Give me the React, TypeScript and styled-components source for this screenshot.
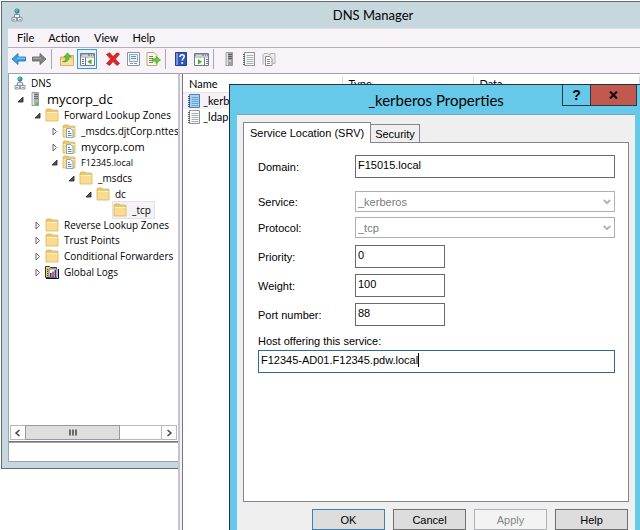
import React from "react";
import styled, { createGlobalStyle } from "styled-components";

const ui = `Lato, "Open Sans", sans-serif`;
const treeFont = `"Open Sans", Lato, sans-serif`;
const classic = `"Liberation Sans", Arial, sans-serif`;

const GlobalStyle = createGlobalStyle`
  *, *::before, *::after { box-sizing: border-box; }
  body { margin: 0; background: #fff; color: #000; font-family: ${ui}; font-size: 11px; }
  button, input, select { font: inherit; color: inherit; margin: 0; padding: 0; border-radius: 0; outline: none; }
  svg { display: block; flex: none; }
`;

const Page = styled.div`
  position: relative;
  min-height: 100vh;
  padding: 1px 0 0 1px;
  display: flex;
  flex-direction: column;
  overflow: hidden;
`;

const ConsoleHead = styled.div`
  border-top: 1px solid #5d6d74;
  border-left: 1px solid #5d6d74;
  background: #c6d8de;
  padding-left: 6px;
`;

const ConsoleTitle = styled.header`
  display: grid;
  grid-template-columns: 18px 1fr;
  align-items: center;
  height: 26px;
`;

const TitleIcon = styled.span`
  padding-left: 3px;
`;

const TitleText = styled.h1`
  margin: 0;
  padding-left: 80px;
  text-align: center;
  font-size: 13px;
  font-weight: 400;
  line-height: 20px;
`;

const MenuBar = styled.nav`
  display: flex;
  gap: 14px;
  height: 20px;
  padding-left: 9px;
  background: #f7f3f8;
  border-top: 1px solid #dfe3ea;
  border-bottom: 1px solid #b4b0ba;
`;

const MenuItem = styled.button`
  border: 0;
  background: none;
  font-size: 11px;
  line-height: 18px;
`;

const ToolBar = styled.div`
  display: flex;
  align-items: flex-start;
  height: 25px;
  padding: 1px 0 0 1px;
  background: #f7f3f8;
`;

const Tool = styled.button<{ $on?: boolean }>`
  width: 20px;
  height: 20px;
  display: grid;
  place-items: center;
  border: 1px solid ${(p) => (p.$on ? "#2f9fd6" : "transparent")};
  background: ${(p) => (p.$on ? "#e2f1fa" : "none")};
  margin-right: ${(p) => (p.$on ? "6px" : "0")};
`;

const ToolSeparator = styled.span`
  width: 1px;
  height: 20px;
  margin: 0 5px 0 2px;
  background: #aaa7b0;
`;

const Body = styled.div`
  flex: 1;
  display: grid;
  grid-template-columns: 177px 1fr;
`;

const LeftFrame = styled.section`
  display: flex;
  flex-direction: column;
  margin-bottom: 61px;
  padding: 0 0 6px 6px;
  border-left: 1px solid #5d6d74;
  border-bottom: 1px solid #5d6d74;
  background: #c6d8de;
`;

const TreePane = styled.div`
  flex: 1;
  display: flex;
  flex-direction: column;
  min-width: 0;
  background: #fff;
  border-top: 1px solid #a3a0ac;
  border-left: 1px solid #a3a0ac;
  border-bottom: 1px solid #77748a;
  padding: 1px;
`;

const TreeList = styled.ul`
  flex: 1;
  margin: 0;
  padding: 0;
  list-style: none;
  font-family: ${treeFont};
`;

const TreeRow = styled.li<{ $depth: number; $compact?: boolean }>`
  display: flex;
  align-items: center;
  height: ${(p) => (p.$compact ? 15 : 16)}px;
  padding-left: ${(p) => (p.$depth < 0 ? 4 : 7 + p.$depth * 17)}px;
  white-space: nowrap;
`;

const Twisty = styled.button`
  flex: none;
  width: 8px;
  height: 12px;
  margin-right: 3px;
  border: 0;
  background: none;
`;

const Node = styled.span<{ $size?: number; $selected?: boolean }>`
  display: flex;
  align-items: center;
  gap: 5px;
  height: 16px;
  padding-right: 3px;
  font-size: ${(p) => p.$size ?? 10}px;
  background: ${(p) => (p.$selected ? "#f5f2f7" : "none")};
  box-shadow: ${(p) => (p.$selected ? "0 0 0 1px #e4e0e6" : "none")};
`;

const ScrollBar = styled.div`
  display: grid;
  grid-template-columns: 14px 95px 1fr 14px;
  height: 15px;
  border: 1px solid #b9b9b9;
`;

const ScrollArrow = styled.button`
  display: grid;
  place-items: center;
  border: 0;
  background: #fff;
`;

const ScrollThumb = styled.div`
  display: grid;
  place-items: center;
  background: #dedede;
  border: 1px solid #9a9a9a;
  margin: -1px 0;
`;

const ScrollTrack = styled.div`
  border-right: 1px solid #b9b9b9;
`;

const StatusStrip = styled.div`
  height: 20px;
  background: #fff;
  border: 1px solid #a3a0ac;
  border-right: 0;
`;

const ListPane = styled.section`
  display: flex;
  flex-direction: column;
  background: #f4f2f6;
  border-left: 2px solid #c5c3cc;
  border-top: 1px solid #a3a0ac;
`;

const ListInner = styled.div`
  flex: 1;
  margin-left: 2px;
  padding-top: 2px;
  border-left: 1px solid #77748a;
  background: #fff;
`;

const RecordTable = styled.table`
  width: 100%;
  border-collapse: collapse;
  table-layout: fixed;
`;

const HeadCell = styled.th<{ $width?: number }>`
  width: ${(p) => (p.$width ? `${p.$width}px` : "auto")};
  height: 16px;
  padding: 0 0 0 6px;
  text-align: left;
  font-weight: 400;
  line-height: 14px;
  border-right: 1px solid #dcd8e0;
  border-bottom: 1px solid #e6e3ea;
`;

const RecordCell = styled.td<{ $selected?: boolean }>`
  height: 16px;
  padding: 0 0 0 4px;
  background: ${(p) => (p.$selected ? "#f5f2f7" : "none")};
`;

const RecordName = styled.span`
  display: flex;
  align-items: center;
  gap: 2px;
  height: 16px;
  font-size: 11px;
`;

const Dialog = styled.section`
  position: absolute;
  top: 84px;
  left: 229px;
  right: 0;
  bottom: 0;
  display: flex;
  flex-direction: column;
  padding: 0 5px 0 7px;
  background: #66c9ea;
  border-top: 1px solid #24323a;
  border-left: 1px solid #24323a;
  overflow: hidden;
`;

const DialogHead = styled.header`
  position: relative;
  height: 29px;
`;

const DialogTitle = styled.h2`
  margin: 0;
  text-align: center;
  font-size: 15px;
  font-weight: 400;
  line-height: 30px;
`;

const Caption = styled.div`
  position: absolute;
  top: 0;
  right: -2px;
  display: flex;
`;

const CaptionButton = styled.button<{ $close?: boolean }>`
  display: grid;
  place-items: center;
  width: ${(p) => (p.$close ? 47 : 29)}px;
  height: 21px;
  margin-left: -1px;
  border: 1px solid #2b3b44;
  border-top: 0;
  background: ${(p) => (p.$close ? "#c2594f" : "#66c9ea")};
  font: 700 14px/20px ${classic};
`;

const DialogBody = styled.div`
  flex: 1;
  display: flex;
  flex-direction: column;
  padding: 7px 6px 0 6px;
  background: #efefef;
  border-top: 1px solid #76a9bd;
  font-family: ${classic};
  font-size: 11px;
`;

const TabList = styled.div`
  display: flex;
  align-items: flex-end;
  height: 20px;
`;

const Tab = styled.button<{ $active?: boolean }>`
  position: relative;
  height: ${(p) => (p.$active ? 21 : 18)}px;
  margin-bottom: ${(p) => (p.$active ? -1 : 0)}px;
  padding: 0 ${(p) => (p.$active ? 6 : 4)}px;
  border: 1px solid #85858f;
  border-left-width: ${(p) => (p.$active ? 1 : 0)}px;
  border-bottom: 0;
  background: ${(p) => (p.$active ? "#fff" : "#efefef")};
  line-height: 18px;
  white-space: nowrap;
`;

const TabPanel = styled.form`
  flex: 1;
  padding: 12px 13px 0 14px;
  background: #fff;
  border: 1px solid #85858f;
`;

const Field = styled.div<{ $gap?: number }>`
  display: grid;
  grid-template-columns: 97px 1fr;
  align-items: center;
  margin-top: ${(p) => p.$gap ?? 0}px;
`;

const TextBox = styled.input<{ $short?: boolean }>`
  display: block;
  width: ${(p) => (p.$short ? "90px" : "100%")};
  height: 23px;
  padding: 0 2px 3px;
  border: 1px solid #6a6a6a;
  background: #fff;
`;

const SelectWrap = styled.div`
  position: relative;
  svg { position: absolute; right: 4px; top: 7px; pointer-events: none; }
`;

const Select = styled.select`
  display: block;
  width: 100%;
  height: 21px;
  padding: 0 2px;
  appearance: none;
  border: 1px solid #acb0b3;
  background: #fff;
  color: #7b7b7b;
  opacity: 1;
`;

const HostLabel = styled.label`
  display: block;
  margin-top: 7px;
  line-height: 16px;
  padding-bottom: 1px;
`;

const HostBox = styled.div`
  display: flex;
  height: 23px;
  padding: 2px 2px 5px;
  border: 1px solid #2c6a9c;
  background: #fff;
`;

const HostInput = styled.input`
  field-sizing: content;
  max-width: 100%;
  border: 0;
  background: none;
`;

const Caret = styled.span`
  width: 1px;
  height: 14px;
  background: #000;
`;

const Actions = styled.div`
  display: flex;
  justify-content: flex-end;
  gap: 8px;
  padding: 7px 1px 0 0;
`;

const ActionButton = styled.button<{ $default?: boolean }>`
  width: 73px;
  height: 21px;
  border: 1px solid ${(p) => (p.$default ? "#3c7fb1" : "#707070")};
  background: #dddddd;
  &:disabled { color: #85858a; background: #f3f3f3; border-color: #adb2b5; }
`;

const DnsIcon = () => (
  <svg width="12" height="14" viewBox="0 0 12 14">
    <path d="M6 5v3M3 10V8.500h6V10" fill="none" stroke="#77838b" />
    <circle cx="6" cy="3" r="2.500" fill="#2787ad" />
    <path d="M4 2l2-1 1 1-1 2-1 0z" fill="#55d36b" />
    <path d="M3.500 6.500h5v3h-5z" fill="#eef1f2" stroke="#77838b" strokeWidth=".8" />
    <path d="M1 9.500h4.500V13H1zM6.500 9.500H11V13H6.500z" fill="#eef1f2" stroke="#77838b" strokeWidth=".8" />
    <path d="M2 11.500h2M8 11.500h2" stroke="#77838b" strokeWidth=".8" />
  </svg>
);

const ServerIcon = ({ gray = false }: { gray?: boolean }) => (
  <svg width="14" height="14" viewBox="0 0 14 14">
    <path d="M4 .500h6.500v13H4z" fill={gray ? "#a1a1a1" : "#aeb3b8"} stroke="#8a8f94" strokeWidth=".8" />
    <path d="M4.500 1h1.500v12H4.500z" fill="#e2e4e7" />
    <path d="M6 2.500h4M6 4.500h4M6 6.500h4" stroke={gray ? "#555" : "#60666b"} strokeWidth=".9" />
    {gray ? <circle cx="8" cy="9" r=".8" fill="#fff" /> : <circle cx="9" cy="12" r="1.400" fill="#45c638" />}
  </svg>
);

const Folder = ({ zone = false }: { zone?: boolean }) => (
  <svg width="14" height="14" viewBox="0 0 14 14">
    <path d="M1 13V2L2 1h4l1 1h5.500l.5 1v10z" fill="#f0c765" stroke="#d3a94f" strokeWidth=".7" />
    <path d="M1.500 5h11v7.500h-11z" fill="#f9dc8f" />
    <path d="M1.500 4.500h11" stroke="#fff0c0" />
    <path d="M8 2.500h4" stroke="#a9d0e0" />
    {zone && (
      <>
        <path d="M4.500 4.500h4l2.500 2v7H4.500z" fill="#f9fcff" stroke="#7f9cb8" strokeWidth=".9" />
        <path d="M6 7.500h2M6 9.500h3.500M6 11.500h3.500" stroke="#3f78c3" strokeWidth=".9" />
      </>
    )}
  </svg>
);

const LogIcon = () => (
  <svg width="14" height="14" viewBox="0 0 14 14">
    <path d="M.500 12.500v-11h4l1 1h6v10z" fill="#e9d56b" stroke="#333" />
    <path d="M4 4h8v8.500H4z" fill="#fff" stroke="#555" strokeWidth=".8" />
    <path d="M5.800 12V8" stroke="#2936c4" strokeWidth="1.600" />
    <path d="M8 12V6.500" stroke="#d12b24" strokeWidth="1.600" />
    <path d="M10.300 12V5" stroke="#2936c4" strokeWidth="1.600" />
    <path d="M1 13.500h12.500V4" fill="none" stroke="#111" />
    <path d="M2.500 4v7" stroke="#333" strokeDasharray="1 1" />
  </svg>
);

const Arrow = ({ open }: { open: boolean }) => (
  <svg width="8" height="12" viewBox="0 0 8 12">
    {open ? (
      <path d="M6 4v5H1z" fill="#555" stroke="#222" strokeWidth=".8" />
    ) : (
      <path d="M2 3v7l3.500-3.500z" fill="#fff" stroke="#666" />
    )}
  </svg>
);

const BackIcon = ({ forward = false }: { forward?: boolean }) => (
  <svg width="16" height="14" viewBox="0 0 16 14">
    <path
      d={forward ? "M15 7L9 1.500V5H1.500v4H9v3.500z" : "M1 7l6-5.500V5h7.500v4H7v3.500z"}
      fill={forward ? "#858585" : "#35a4e6"}
      stroke={forward ? "#5c5c5c" : "#1c6fae"}
      strokeWidth=".8"
    />
    <path d={forward ? "M2 6.200h8" : "M6 6.200h8"} stroke={forward ? "#b3b3b3" : "#8ed3f7"} />
  </svg>
);

const UpFolderIcon = () => (
  <svg width="14" height="14" viewBox="0 0 14 14">
    <path d="M.500 13.500V5h5l1-1.500h7v10z" fill="#f3ce72" stroke="#d0a648" strokeWidth=".8" />
    <path d="M1 7.500h12V13H1z" fill="#fae0a0" />
    <path d="M2.500 9.500C5 9.500 6 8 6 5H3.800L7.500.800 11.300 5H9c0 4-3 6-6.500 4.500z" fill="#5fc43a" stroke="#2e8a1a" strokeWidth=".5" />
  </svg>
);

const WindowIcon = ({ play = false }: { play?: boolean }) => (
  <svg width="15" height="13" viewBox="0 0 15 13">
    <path d="M.500.500h14v12H.500z" fill="#fff" stroke="#6f7c88" />
    <path d="M1 1h13v2.500H1z" fill="#8794a0" />
    <path d="M2 2.200h6M10 2.200h1M12 2.200h1" stroke="#fff" strokeWidth=".9" />
    <path d="M1 4.500h13" stroke="#c1c8ce" />
    {play ? (
      <>
        <path d="M10.500 4.500v8" stroke="#6f7c88" />
        <path d="M12 6.500h2M12 8.500h2M12 10.500h2" stroke="#5278a8" />
        <path d="M4 6l4 2.700-4 2.800z" fill="#3fb517" />
      </>
    ) : (
      <>
        <path d="M5.500 4.500v8" stroke="#6f7c88" />
        <path d="M2 6.500h2M2 8.500h2M2 10.500h2" stroke="#5278a8" />
        <path d="M11.500 6l-4 2.700 4 2.800z" fill="#3fb517" />
      </>
    )}
  </svg>
);

const DeleteIcon = () => (
  <svg width="14" height="14" viewBox="0 0 14 14">
    <path
      d="M.500 2.500L3.500.700 7 4.500 11 .800 13.500 2 9.300 7l4.200 4.500-2.500 2L7 9.500l-3.500 4-3-2L4.700 7z"
      fill="#e02626"
      stroke="#b01515"
      strokeWidth=".7"
    />
  </svg>
);

const PropertiesIcon = () => (
  <svg width="13" height="14" viewBox="0 0 13 14">
    <path d="M.500.500h12v13H.500z" fill="#fafbfc" stroke="#8c949b" />
    <path d="M2.500 2.500h8v7h-8z" fill="#e5f1f9" stroke="#7f98a8" strokeWidth=".8" />
    <path d="M4 4.500h5M4 6.500h5" stroke="#4aa0c9" />
    <path d="M3 11.500h3M7 11.500h3" stroke="#8c949b" />
  </svg>
);

const ExportIcon = () => (
  <svg width="15" height="14" viewBox="0 0 15 14">
    <path d="M1 .500h7l3 3v10H1z" fill="#fdf9e4" stroke="#b3a878" />
    <path d="M3 4.500h4M3 6.500h4M3 8.500h4M3 10.500h4" stroke="#7e7b6a" />
    <path d="M6.500 6.800H10V4.500L14.500 8 10 11.500V9.200H6.500z" fill="#67cf3b" stroke="#389a1b" strokeWidth=".6" />
  </svg>
);

const HelpIcon = () => (
  <svg width="12" height="14" viewBox="0 0 12 14">
    <path d="M.500.500h11v13H.500z" fill="#3156bd" stroke="#223f94" />
    <path d="M1 1h2v12H1z" fill="#7791dc" />
    <path d="M5 5c0-3 4.200-2.700 4.200-.5 0 1.700-2 1.700-2 4" fill="none" stroke="#fff" strokeWidth="1.500" />
    <circle cx="7.200" cy="11" r="1" fill="#fff" />
  </svg>
);

const RecordIcon = ({ blue = false }: { blue?: boolean }) => (
  <svg width="14" height="14" viewBox="0 0 14 14">
    <path d="M2.500.500h10v13h-10z" fill={blue ? "#a8d3f3" : "#fafafa"} stroke={blue ? "#3f77ab" : "#888"} strokeWidth=".9" />
    <path d="M4.500 3.500h7M4.500 5.500h7M4.500 7.500h7M4.500 9.500h7M4.500 11.500h7" stroke={blue ? "#5d9ed2" : "#9aa7ae"} strokeWidth=".9" />
    <path d="M1 2.500h2M1 4.500h2M1 6.500h2M1 8.500h2M1 10.500h2M1 12.500h2" stroke={blue ? "#1f4c78" : "#555"} strokeWidth=".9" />
  </svg>
);

const ZoneDocIcon = () => (
  <svg width="14" height="14" viewBox="0 0 14 14">
    <path d="M1 12.500V2.500l1-1h4l1 1V3h1V1.500h5v10H11" fill="#ececec" stroke="#a3a3a3" strokeWidth=".8" />
    <path d="M3.500 4.500h4l2.500 2v7H3.500z" fill="#fff" stroke="#7d7d7d" strokeWidth=".9" />
    <path d="M5 7.500h3M5 9.500h3M5 11.500h3" stroke="#777" strokeWidth=".9" />
  </svg>
);

const Chevron = ({ dir }: { dir: "left" | "right" | "down" }) => {
  const paths = { left: "M5.500 1L2 4l3.500 3", right: "M2.500 1L6 4 2.500 7", down: "M.800 2L4 5.200 7.200 2" };
  return (
    <svg width="8" height="8" viewBox="0 0 8 8">
      <path d={paths[dir]} fill="none" stroke={dir === "down" ? "#b3b3b3" : "#444"} strokeWidth={dir === "down" ? 2 : 1.5} />
    </svg>
  );
};

type TreeItem = {
  label: string;
  depth: number;
  icon: React.ReactNode;
  open?: boolean;
  compact?: boolean;
  size?: number;
  selected?: boolean;
};

const tree: TreeItem[] = [
  { label: "DNS", depth: -1, icon: <DnsIcon /> },
  { label: "mycorp_dc", depth: 0, icon: <ServerIcon />, open: true, size: 13 },
  { label: "Forward Lookup Zones", depth: 1, icon: <Folder />, open: true },
  { label: "_msdcs.djtCorp.nttes", depth: 2, icon: <Folder zone />, open: false },
  { label: "mycorp.com", depth: 2, icon: <Folder zone />, open: false, size: 11, compact: true },
  { label: "F12345.local", depth: 2, icon: <Folder zone />, open: true, size: 9 },
  { label: "_msdcs", depth: 3, icon: <Folder />, open: true },
  { label: "dc", depth: 4, icon: <Folder />, open: true },
  { label: "_tcp", depth: 5, icon: <Folder />, selected: true, compact: true },
  { label: "Reverse Lookup Zones", depth: 1, icon: <Folder />, open: false, compact: true },
  { label: "Trust Points", depth: 1, icon: <Folder />, open: false },
  { label: "Conditional Forwarders", depth: 1, icon: <Folder />, open: false },
  { label: "Global Logs", depth: 1, icon: <LogIcon />, open: false },
];

export default function App() {
  return (
    <>
      <GlobalStyle />
      <Page>
        <ConsoleHead>
          <ConsoleTitle>
            <TitleIcon>
              <DnsIcon />
            </TitleIcon>
            <TitleText>DNS Manager</TitleText>
          </ConsoleTitle>
          <MenuBar>
            {["File", "Action", "View", "Help"].map((m) => (
              <MenuItem key={m}>{m}</MenuItem>
            ))}
          </MenuBar>
          <ToolBar>
            <Tool aria-label="Back"><BackIcon /></Tool>
            <Tool aria-label="Forward"><BackIcon forward /></Tool>
            <ToolSeparator />
            <Tool aria-label="Up one level"><UpFolderIcon /></Tool>
            <Tool aria-label="Show console tree" $on><WindowIcon /></Tool>
            <Tool aria-label="Delete"><DeleteIcon /></Tool>
            <Tool aria-label="Properties"><PropertiesIcon /></Tool>
            <Tool aria-label="Export list"><ExportIcon /></Tool>
            <ToolSeparator />
            <Tool aria-label="Help"><HelpIcon /></Tool>
            <Tool aria-label="Show action pane"><WindowIcon play /></Tool>
            <ToolSeparator />
            <Tool aria-label="New server"><ServerIcon gray /></Tool>
            <Tool aria-label="New record"><RecordIcon /></Tool>
            <Tool aria-label="New zone"><ZoneDocIcon /></Tool>
          </ToolBar>
        </ConsoleHead>
        <Body>
          <LeftFrame>
            <TreePane>
              <TreeList>
                {tree.map((t, i) => (
                  <TreeRow key={i} $depth={t.depth} $compact={t.compact}>
                    {t.depth >= 0 &&
                      (t.open === undefined ? (
                        <Twisty as="span" />
                      ) : (
                        <Twisty aria-label={t.open ? "Collapse" : "Expand"}>
                          <Arrow open={t.open} />
                        </Twisty>
                      ))}
                    <Node $size={t.size} $selected={t.selected}>
                      {t.icon}
                      {t.label}
                    </Node>
                  </TreeRow>
                ))}
              </TreeList>
              <ScrollBar>
                <ScrollArrow aria-label="Scroll left"><Chevron dir="left" /></ScrollArrow>
                <ScrollThumb>
                  <svg width="8" height="7" viewBox="0 0 8 7">
                    <path d="M1 .500v6M4 .500v6M7 .500v6" stroke="#444" strokeWidth="1.500" />
                  </svg>
                </ScrollThumb>
                <ScrollTrack />
                <ScrollArrow aria-label="Scroll right"><Chevron dir="right" /></ScrollArrow>
              </ScrollBar>
            </TreePane>
            <StatusStrip />
          </LeftFrame>
          <ListPane>
            <ListInner>
              <RecordTable>
                <thead>
                  <tr>
                    <HeadCell $width={159}>Name</HeadCell>
                    <HeadCell $width={131}>Type</HeadCell>
                    <HeadCell>Data</HeadCell>
                  </tr>
                </thead>
                <tbody>
                  <tr>
                    <RecordCell $selected>
                      <RecordName><RecordIcon blue />_kerberos</RecordName>
                    </RecordCell>
                  </tr>
                  <tr>
                    <RecordCell>
                      <RecordName><RecordIcon />_ldap</RecordName>
                    </RecordCell>
                  </tr>
                </tbody>
              </RecordTable>
            </ListInner>
          </ListPane>
        </Body>
        <Dialog role="dialog" aria-label="_kerberos Properties">
          <DialogHead>
            <DialogTitle>_kerberos Properties</DialogTitle>
            <Caption>
              <CaptionButton>?</CaptionButton>
              <CaptionButton $close aria-label="Close">
                <svg width="9" height="8" viewBox="0 0 9 8">
                  <path d="M1 .500l7 7M8 .500l-7 7" stroke="#111" strokeWidth="2.200" />
                </svg>
              </CaptionButton>
            </Caption>
          </DialogHead>
          <DialogBody>
            <TabList role="tablist">
              <Tab role="tab" aria-selected="true" $active>Service Location (SRV)</Tab>
              <Tab role="tab" aria-selected="false">Security</Tab>
            </TabList>
            <TabPanel>
              <Field>
                <label htmlFor="domain">Domain:</label>
                <TextBox id="domain" defaultValue="F15015.local" />
              </Field>
              <Field $gap={13}>
                <label htmlFor="service">Service:</label>
                <SelectWrap>
                  <Select id="service" disabled><option>_kerberos</option></Select>
                  <Chevron dir="down" />
                </SelectWrap>
              </Field>
              <Field $gap={5}>
                <label htmlFor="protocol">Protocol:</label>
                <SelectWrap>
                  <Select id="protocol" disabled><option>_tcp</option></Select>
                  <Chevron dir="down" />
                </SelectWrap>
              </Field>
              <Field $gap={7}>
                <label htmlFor="priority">Priority:</label>
                <TextBox id="priority" $short defaultValue="0" />
              </Field>
              <Field $gap={6}>
                <label htmlFor="weight">Weight:</label>
                <TextBox id="weight" $short defaultValue="100" />
              </Field>
              <Field $gap={6}>
                <label htmlFor="port">Port number:</label>
                <TextBox id="port" $short defaultValue="88" />
              </Field>
              <HostLabel htmlFor="host">Host offering this service:</HostLabel>
              <HostBox>
                <HostInput id="host" defaultValue="F12345-AD01.F12345.pdw.local" />
                <Caret />
              </HostBox>
            </TabPanel>
            <Actions>
              <ActionButton $default>OK</ActionButton>
              <ActionButton>Cancel</ActionButton>
              <ActionButton disabled>Apply</ActionButton>
              <ActionButton>Help</ActionButton>
            </Actions>
          </DialogBody>
        </Dialog>
      </Page>
    </>
  );
}
